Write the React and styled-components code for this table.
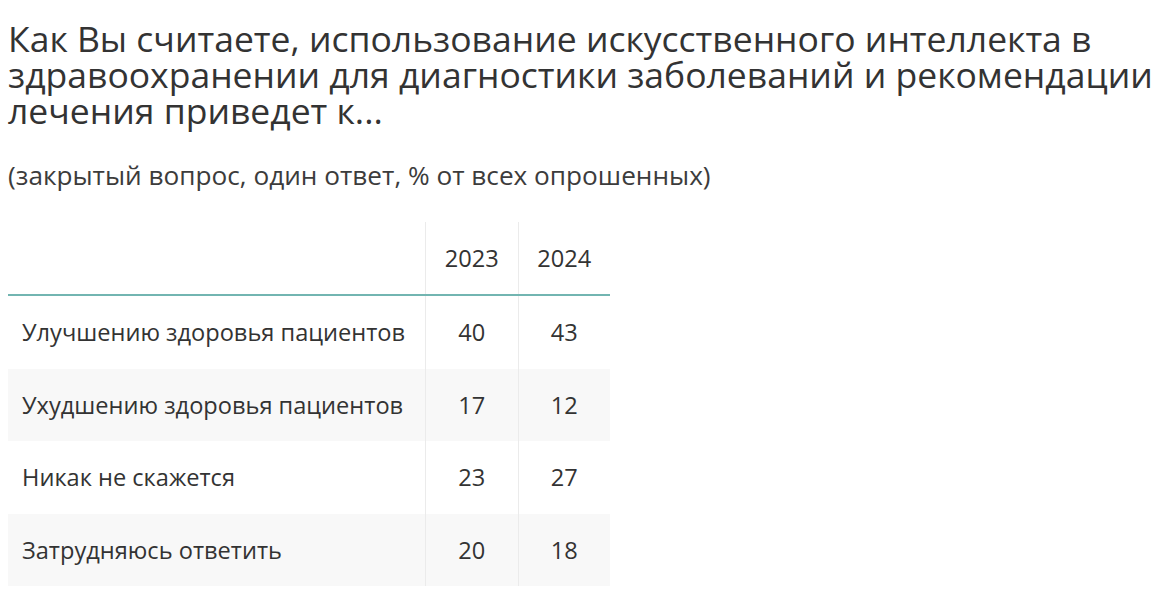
import React from "react"
import styled, { createGlobalStyle } from "styled-components"

const GlobalStyle = createGlobalStyle`
	body {
		margin: 0;
		background: #ffffff;
		font-family: "Open Sans", "Noto Sans", sans-serif;
		color: #333333;
	}
`

const Page = styled.div`
	padding: 20px 8px 20px 8px;
`

const Title = styled.h1`
	margin: 0;
	max-width: 1164px;
	font-size: 35.5px;
	line-height: 36px;
	font-weight: 400;
	color: #333333;
`

const Subtitle = styled.p`
	margin: 32px 0 0 0;
	font-size: 26.2px;
	line-height: 30px;
	color: #3c3c3c;
`

const Table = styled.table`
	margin-top: 32px;
	width: 602px;
	border-collapse: collapse;
	font-size: 23.6px;
	color: #333333;
`

const HeadCell = styled.th`
	height: 72px;
	padding: 0;
	font-weight: 400;
	text-align: center;
	border-bottom: 2px solid #72b5b1;
	border-left: ${p => (p.first ? "none" : "1px solid #ebebeb")};
	width: ${p => (p.first ? "417px" : "auto")};
`

const Row = styled.tr`
	background: ${p => (p.shaded ? "#f8f8f8" : "#ffffff")};
`

const Label = styled.td`
	height: 72.5px;
	padding: 0 0 0 14px;
	white-space: nowrap;
`

const Value = styled.td`
	text-align: center;
	border-left: 1px solid #ebebeb;
`

const rows = [
	["Улучшению здоровья пациентов", 40, 43],
	["Ухудшению здоровья пациентов", 17, 12],
	["Никак не скажется", 23, 27],
	["Затрудняюсь ответить", 20, 18]
]

const App = () => {
	return (
		<Page>
			<GlobalStyle />
			<Title>
				Как Вы считаете, использование искусственного интеллекта в
				здравоохранении для диагностики заболеваний и рекомендации
				лечения приведет к...
			</Title>
			<Subtitle>(закрытый вопрос, один ответ, % от всех опрошенных)</Subtitle>
			<Table>
				<thead>
					<tr>
						<HeadCell first />
						<HeadCell>2023</HeadCell>
						<HeadCell>2024</HeadCell>
					</tr>
				</thead>
				<tbody>
					{rows.map(([label, a, b], i) => (
						<Row key={label} shaded={i % 2 === 1}>
							<Label>{label}</Label>
							<Value>{a}</Value>
							<Value>{b}</Value>
						</Row>
					))}
				</tbody>
			</Table>
		</Page>
	)
}

export default App
